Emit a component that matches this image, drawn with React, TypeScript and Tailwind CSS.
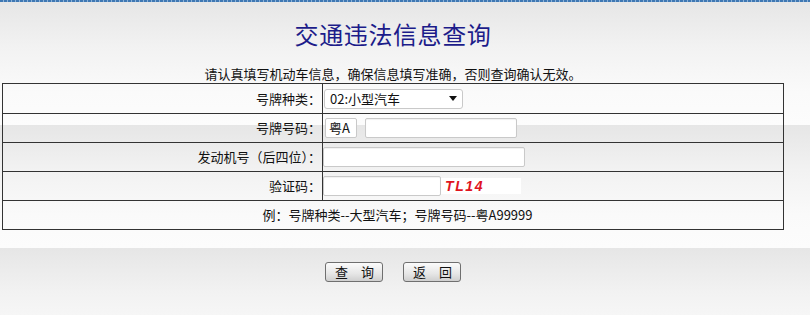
import React from "react";

const font = { fontFamily: '"Noto Sans CJK SC", "Noto Sans", sans-serif' };

function Input({ w, h = 20 }: { w: number; h?: number }) {
  return (
    <div
      className="bg-white border border-[#c9c9c9] rounded-[2px] shadow-[inset_0_1px_1px_rgba(0,0,0,0.06)]"
      style={{ width: w, height: h }}
    />
  );
}

export default function App() {
  return (
    <div className="w-[810px] h-[315px] overflow-hidden text-[13px] text-[#111]" style={font}>
      <div className="h-[2px] bg-[image:repeating-linear-gradient(90deg,#3f78b3_0px,#3f78b3_3px,#8db2d8_3px,#8db2d8_4px)]" />
      <div className="h-[313px] bg-[image:repeating-linear-gradient(180deg,#e6e6e6_0px,#f2f2f2_45px,#fafafa_90px,#fcfcfc_123px)]">
        <div className="w-[786px] flex flex-col items-center">
          <div className="mt-[17px] h-[30px] leading-[30px] text-[24px] text-[#1c1c8a] tracking-[0.6px]">
            交通违法信息查询
          </div>
          <div className="mt-[17px] h-[16px] leading-[16px]">
            请认真填写机动车信息，确保信息填写准确，否则查询确认无效。
          </div>
          <div className="mt-[1px] w-[782px] border border-[#333]">
            <div className="flex h-[29px]">
              <div className="w-[319px] flex items-center justify-end pr-[1px]">号牌种类：</div>
              <div className="flex-1 border-l border-[#333] flex items-center pl-[1px]">
                <div className="w-[139px] h-[20px] bg-white border border-[#c9c9c9] rounded-[3px] flex items-center pl-[5px] pr-[5px] justify-between">
                  <span className="leading-[16px]">02:小型汽车</span>
                  <svg width="8" height="5" viewBox="0 0 8 5">
                    <path d="M0 0H8L4 5Z" fill="#111" />
                  </svg>
                </div>
              </div>
            </div>
            <div className="flex h-[29px] border-t border-[#333]">
              <div className="w-[319px] flex items-center justify-end pr-[1px]">号牌号码：</div>
              <div className="flex-1 border-l border-[#333] flex items-center pl-[2px] gap-[8px]">
                <div className="w-[32px] h-[20px] bg-white border border-[#c9c9c9] rounded-[2px] flex items-center pl-[3px] leading-[16px]">
                  粤A
                </div>
                <Input w={152} />
              </div>
            </div>
            <div className="flex h-[29px] border-t border-[#333]">
              <div className="w-[319px] flex items-center justify-end pr-[1px]">发动机号（后四位）：</div>
              <div className="flex-1 border-l border-[#333] flex items-center pl-0">
                <Input w={202} />
              </div>
            </div>
            <div className="flex h-[29px] border-t border-[#333]">
              <div className="w-[319px] flex items-center justify-end pr-[1px]">验证码：</div>
              <div className="flex-1 border-l border-[#333] flex items-center">
                <Input w={118} />
                <div className="w-[80px] h-[16px] bg-white flex items-center pl-[4px]">
                  <span
                    className="text-[14px] leading-[16px] font-bold italic text-[#e0141e] tracking-[1.6px]"
                    style={{ fontFamily: '"Liberation Sans", Arial, sans-serif' }}
                  >
                    TL14
                  </span>
                </div>
              </div>
            </div>
            <div className="flex h-[29px] border-t border-[#333] items-center justify-center pl-[9px]">
              例：号牌种类--大型汽车；号牌号码--粤A99999
            </div>
          </div>
          <div className="mt-[32px] flex gap-[20px]">
            <button className="w-[58px] h-[20px] border border-[#6f6f6f] rounded-[3px] bg-[image:linear-gradient(180deg,#fbfbfb,#e6e6e6_60%,#cfcfcf)] leading-[16px] text-[13px] text-[#111] pl-[1px]">
              查　询
            </button>
            <button className="w-[58px] h-[20px] border border-[#6f6f6f] rounded-[3px] bg-[image:linear-gradient(180deg,#fbfbfb,#e6e6e6_60%,#cfcfcf)] leading-[16px] text-[13px] text-[#111] pl-[1px]">
              返　回
            </button>
          </div>
        </div>
      </div>
    </div>
  );
}
